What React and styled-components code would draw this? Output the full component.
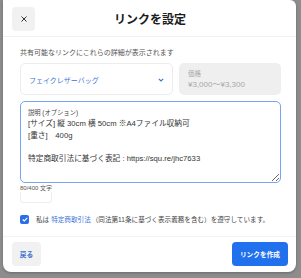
import React from 'react'
import styled, { createGlobalStyle } from 'styled-components'

const Global = createGlobalStyle`
  html, body {
    margin: 0;
    padding: 0;
    background: #8d8d8d;
    font-family: "Liberation Sans", "Noto Sans CJK JP", sans-serif;
  }
  #root {
    height: 278px;
    overflow: hidden;
  }
`

const Overlay = styled.div`
  height: 278px;
  padding: 0 5px 0 3px;
  box-sizing: border-box;
`

const Modal = styled.div`
  height: 272px;
  background: #fff;
  border-radius: 0 0 8px 8px;
  border-top-right-radius: 6px;
  box-shadow: 0 1px 3px rgba(0, 0, 0, 0.25);
  display: flex;
  flex-direction: column;
  color: #222;
`

const Header = styled.div`
  height: 36px;
  border-bottom: 1px solid #f0f0f0;
  display: grid;
  grid-template-columns: 23px 1fr 23px;
  align-items: center;
  padding: 0 8px 0 9px;
`

const CloseButton = styled.button`
  width: 23px;
  height: 24px;
  margin-top: 2px;
  border: none;
  border-radius: 4px;
  background: #f1f1f1;
  display: flex;
  align-items: center;
  justify-content: center;
  padding: 0;
`

const Title = styled.h1`
  margin: 0;
  text-align: center;
  font-size: 12px;
  font-weight: 700;
  color: #1c1c1c;
`

const Body = styled.div`
  flex: 1;
  padding: 11px 15px 0 17px;
  display: flex;
  flex-direction: column;
`

const Subtitle = styled.p`
  margin: 0;
  font-size: 7px;
  line-height: 9px;
  color: #555;
`

const Row = styled.div`
  margin-top: 6px;
  height: 32px;
  display: grid;
  grid-template-columns: 1fr 102px;
  gap: 6px;
`

const Select = styled.div`
  border: 1px solid #ececec;
  border-radius: 5px;
  display: flex;
  align-items: center;
  justify-content: space-between;
  padding: 2px 8px 0 8px;
  font-size: 7px;
  color: #3a73d8;
`

const PriceBox = styled.div`
  background: #efefef;
  border-radius: 5px;
  padding: 6px 9px 0;
  display: flex;
  flex-direction: column;
  color: #a8a8a8;
`

const PriceLabel = styled.span`
  font-size: 6.5px;
  line-height: 9px;
`

const PriceValue = styled.span`
  font-size: 8px;
  line-height: 13px;
`

const Field = styled.div`
  margin-top: 6px;
  height: 82px;
  box-sizing: border-box;
  border: 1.5px solid #76a4f2;
  border-radius: 5px;
  padding: 6px 0 0 7px;
  display: flex;
  flex-direction: column;
`

const FieldLabel = styled.label`
  font-size: 6.3px;
  line-height: 9px;
  margin-bottom: 1px;
  color: #444;
`

const TextArea = styled.textarea`
  flex: 1;
  margin: 0;
  border: none;
  outline: none;
  padding: 0 6px 0 0;
  resize: vertical;
  font-family: "Liberation Sans", "Noto Sans CJK JP", sans-serif;
  font-size: 7.7px;
  line-height: 11.6px;
  color: #333;
  background: transparent;
  overflow: hidden;
`

const Counter = styled.span`
  margin-top: 1px;
  font-size: 6px;
  line-height: 8px;
  color: #555;
`

const EmptyBox = styled.div`
  width: 32px;
  height: 11px;
  box-sizing: border-box;
  border: 1px solid #ededed;
  border-top: none;
  border-radius: 0 0 3px 3px;
`

const CheckRow = styled.label`
  margin-top: 11px;
  display: flex;
  align-items: center;
  gap: 7px;
  font-size: 6.6px;
  color: #444;
`

const CheckBox = styled.span`
  width: 9px;
  height: 9px;
  border-radius: 2px;
  background: #2a6fe8;
  display: flex;
  align-items: center;
  justify-content: center;
  flex-shrink: 0;
`

const Link = styled.span`
  color: #3a73d8;
  margin: 0 1px 0 2px;
`

const Footer = styled.div`
  border-top: 1px solid #f3f3f3;
  padding: 5px 8px 6px 9px;
  display: flex;
  justify-content: space-between;
`

const Button = styled.button`
  height: 24px;
  width: ${p => p.$w}px;
  border: none;
  border-radius: 4px;
  padding: 0;
  font-family: "Liberation Sans", "Noto Sans CJK JP", sans-serif;
  font-size: 6.7px;
  font-weight: 700;
  background: ${p => (p.$primary ? '#2170ee' : '#f1f1f1')};
  color: ${p => (p.$primary ? '#fff' : '#3a6fd0')};
`

const description = '[サイズ] 縦 30cm 横 50cm ※A4ファイル収納可\n[重さ]　400g\n\n特定商取引法に基づく表記 : https://squ.re/jhc7633'

const App = () => {
  return (
    <>
      <Global />
      <Overlay>
        <Modal>
          <Header>
            <CloseButton aria-label="close">
              <svg width="6" height="6" viewBox="0 0 6 6">
                <path d="M0.5 0.5L5.5 5.5M5.5 0.5L0.5 5.5" stroke="#333" strokeWidth="1" />
              </svg>
            </CloseButton>
            <Title>リンクを設定</Title>
            <span />
          </Header>
          <Body>
            <Subtitle>共有可能なリンクにこれらの詳細が表示されます</Subtitle>
            <Row>
              <Select>
                <span>フェイクレザーバッグ</span>
                <svg width="6" height="4" viewBox="0 0 6 4">
                  <path d="M0.8 0.8L3 3L5.2 0.8" fill="none" stroke="#3a73d8" strokeWidth="1.1" />
                </svg>
              </Select>
              <PriceBox>
                <PriceLabel>価格</PriceLabel>
                <PriceValue>¥3,000〜¥3,300</PriceValue>
              </PriceBox>
            </Row>
            <Field>
              <FieldLabel>説明 (オプション)</FieldLabel>
              <TextArea defaultValue={description} />
            </Field>
            <Counter>80/400 文字</Counter>
            <EmptyBox />
            <CheckRow>
              <CheckBox>
                <svg width="6" height="5" viewBox="0 0 6 5">
                  <path d="M0.7 2.5L2.3 4L5.3 0.8" fill="none" stroke="#fff" strokeWidth="1.1" />
                </svg>
              </CheckBox>
              <span>
                私は<Link>特定商取引法</Link>（同法第11条に基づく表示義務を含む）を遵守しています。
              </span>
            </CheckRow>
          </Body>
          <Footer>
            <Button $w={29}>戻る</Button>
            <Button $w={56} $primary>リンクを作成</Button>
          </Footer>
        </Modal>
      </Overlay>
    </>
  )
}

export default App
